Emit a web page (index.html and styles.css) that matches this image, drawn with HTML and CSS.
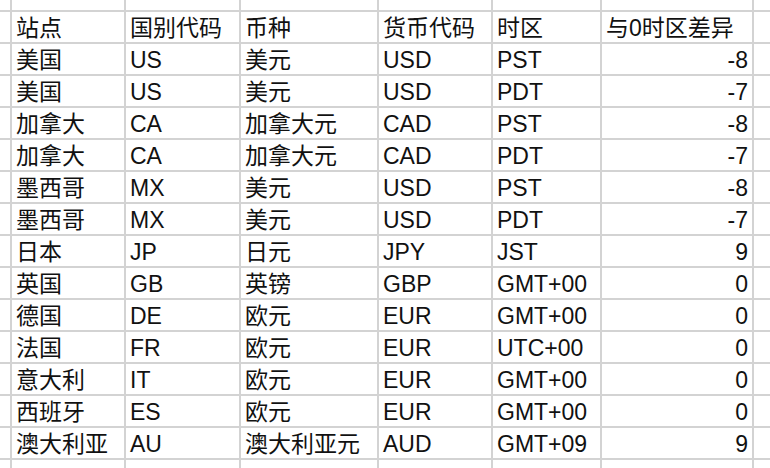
FILE: index.html
```html
<!DOCTYPE html>
<html lang="zh">
<head>
<meta charset="utf-8">
<link rel="stylesheet" href="styles.css">
</head>
<body>
<div class="sheet">
  <div class="c"></div><div class="c"></div><div class="c"></div><div class="c"></div><div class="c"></div><div class="c"></div><div class="c"></div><div class="c"></div>

  <div class="c"></div><div class="c">站点</div><div class="c">国别代码</div><div class="c">币种</div><div class="c">货币代码</div><div class="c">时区</div><div class="c">与0时区差异</div><div class="c"></div>

  <div class="c"></div><div class="c">美国</div><div class="c">US</div><div class="c">美元</div><div class="c">USD</div><div class="c">PST</div><div class="c n">-8</div><div class="c"></div>
  <div class="c"></div><div class="c">美国</div><div class="c">US</div><div class="c">美元</div><div class="c">USD</div><div class="c">PDT</div><div class="c n">-7</div><div class="c"></div>
  <div class="c"></div><div class="c">加拿大</div><div class="c">CA</div><div class="c">加拿大元</div><div class="c">CAD</div><div class="c">PST</div><div class="c n">-8</div><div class="c"></div>
  <div class="c"></div><div class="c">加拿大</div><div class="c">CA</div><div class="c">加拿大元</div><div class="c">CAD</div><div class="c">PDT</div><div class="c n">-7</div><div class="c"></div>
  <div class="c"></div><div class="c">墨西哥</div><div class="c">MX</div><div class="c">美元</div><div class="c">USD</div><div class="c">PST</div><div class="c n">-8</div><div class="c"></div>
  <div class="c"></div><div class="c">墨西哥</div><div class="c">MX</div><div class="c">美元</div><div class="c">USD</div><div class="c">PDT</div><div class="c n">-7</div><div class="c"></div>
  <div class="c"></div><div class="c">日本</div><div class="c">JP</div><div class="c">日元</div><div class="c">JPY</div><div class="c">JST</div><div class="c n">9</div><div class="c"></div>
  <div class="c"></div><div class="c">英国</div><div class="c">GB</div><div class="c">英镑</div><div class="c">GBP</div><div class="c">GMT+00</div><div class="c n">0</div><div class="c"></div>
  <div class="c"></div><div class="c">德国</div><div class="c">DE</div><div class="c">欧元</div><div class="c">EUR</div><div class="c">GMT+00</div><div class="c n">0</div><div class="c"></div>
  <div class="c"></div><div class="c">法国</div><div class="c">FR</div><div class="c">欧元</div><div class="c">EUR</div><div class="c">UTC+00</div><div class="c n">0</div><div class="c"></div>
  <div class="c"></div><div class="c">意大利</div><div class="c">IT</div><div class="c">欧元</div><div class="c">EUR</div><div class="c">GMT+00</div><div class="c n">0</div><div class="c"></div>
  <div class="c"></div><div class="c">西班牙</div><div class="c">ES</div><div class="c">欧元</div><div class="c">EUR</div><div class="c">GMT+00</div><div class="c n">0</div><div class="c"></div>
  <div class="c"></div><div class="c">澳大利亚</div><div class="c">AU</div><div class="c">澳大利亚元</div><div class="c">AUD</div><div class="c">GMT+09</div><div class="c n">9</div><div class="c"></div>

  <div class="c"></div><div class="c"></div><div class="c"></div><div class="c"></div><div class="c"></div><div class="c"></div><div class="c"></div><div class="c"></div>
</div>
</body>
</html>
```

FILE: styles.css
```css
html, body {
  margin: 0;
  padding: 0;
  background: #ffffff;
  overflow: hidden;
}

.sheet {
  display: grid;
  width: 790px;
  grid-template-columns: 10px 112px 113px 136px 112px 107px 150px 30px;
  grid-template-rows: 10px repeat(14, 30px) 20px;
  gap: 2px;
  background: #d3d3d3;
  font-family: "Liberation Sans", "Noto Sans CJK SC", sans-serif;
  font-size: 23px;
  color: #111111;
}

.c {
  background: #ffffff;
  display: flex;
  align-items: center;
  padding: 3px 4px 0 4px;
  white-space: nowrap;
  overflow: hidden;
  line-height: 1;
}

.n {
  justify-content: flex-end;
}
```
